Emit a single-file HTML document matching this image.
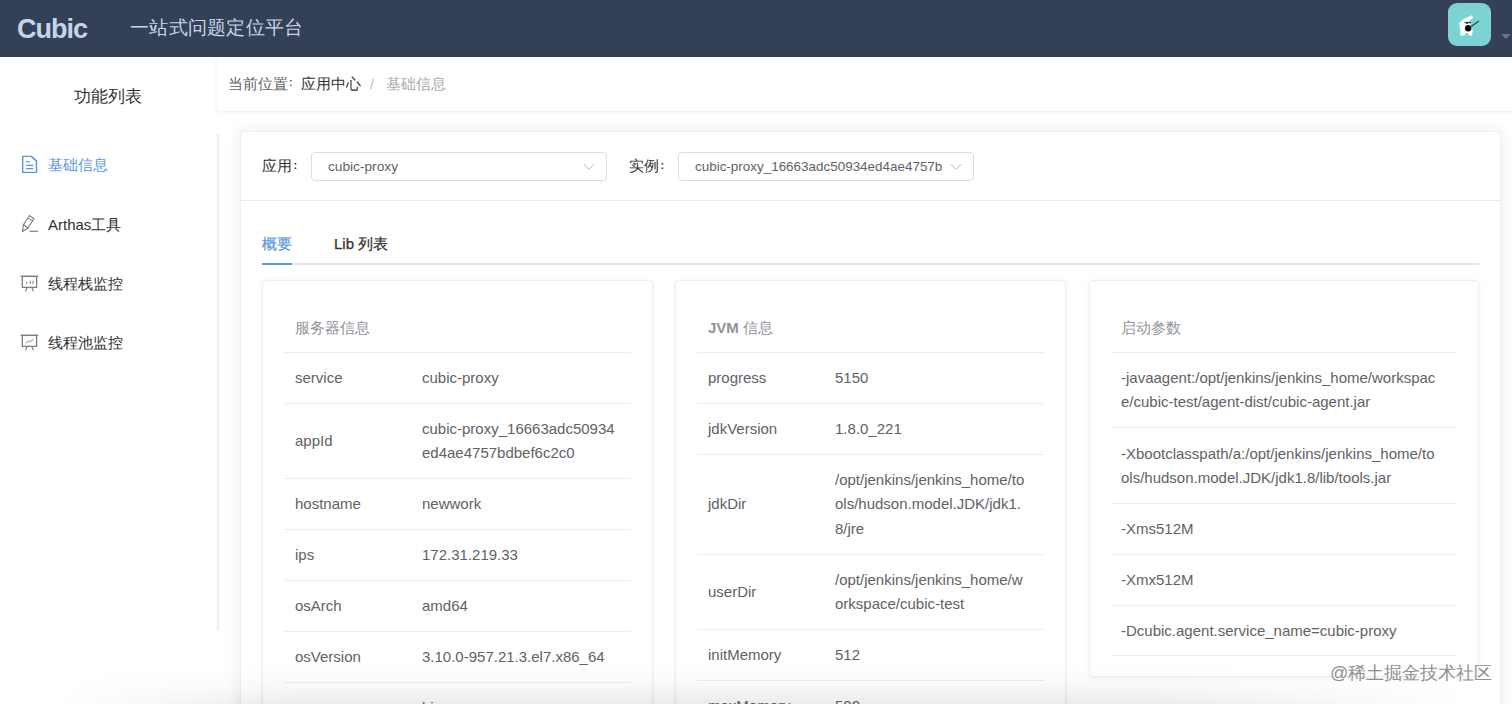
<!DOCTYPE html>
<html><head><meta charset="utf-8">
<style>
*{box-sizing:border-box;margin:0;padding:0}
html,body{width:1512px;height:704px;overflow:hidden;background:#fff;font-family:"Liberation Sans",sans-serif;}
.abs{position:absolute}
#hdr{left:0;top:0;width:1512px;height:57px;background:#334056}
#logo{left:17px;top:13.5px;font-size:27px;font-weight:bold;color:#c6d4e7;line-height:30px;letter-spacing:-1px}
#title{left:130px;top:16px;font-size:19px;letter-spacing:0.25px;color:#c8d5e8;line-height:24px;white-space:nowrap}
#avatar{left:1448px;top:3px;width:43px;height:43px;border-radius:9px;background:#7dd3d3;overflow:hidden}
#caret{left:1501px;top:34px;width:0;height:0;border-left:5px solid transparent;border-right:5px solid transparent;border-top:5px solid #6d7584}
#side-title{left:0;top:84.5px;width:215px;text-align:center;font-size:17px;color:#303133;line-height:24px}
.mi{left:0;width:218px;height:30px;line-height:30px;font-size:15px;color:#303133;white-space:nowrap}
.mi .t{position:absolute;left:48px;top:0}
.mi svg{position:absolute;left:20px;top:7px}
#vline{left:217px;top:134px;width:2px;height:496px;background:#ededed}
#crumb{left:217px;top:57px;width:1300px;height:54px;background:#fff;box-shadow:0 1px 5px rgba(0,0,0,0.07);border-radius:2px}
.cr{top:72px;line-height:24px;font-size:14.7px;white-space:nowrap}
#panel{left:240px;top:131px;width:1260.5px;height:600px;background:#fff;box-shadow:0 0 14px 1px rgba(0,0,0,0.07);border:1px solid #f0f0f0;border-radius:3px}
.lbl{font-size:15px;color:#303133;line-height:24px;white-space:nowrap}
.colon{font-size:11px;line-height:11px;font-weight:bold}
.sel{height:29px;border:1px solid #dddddd;border-radius:4px;background:#fff}
.sel .v{position:absolute;left:16px;top:0;line-height:27px;font-size:13.7px;color:#606266;white-space:nowrap}
.sel svg{position:absolute;top:10px}
#formline{left:241px;top:200px;width:1259px;height:1px;background:#ebebeb}
#tabline{left:262px;top:263px;width:1217px;height:2px;background:#e6e6e6}
#tabbar{left:262px;top:263px;width:30px;height:2px;background:#5b97dc}
.tab{font-size:15px;-webkit-text-stroke:0.25px currentColor;line-height:24px;white-space:nowrap;top:232px}
.card{top:280px;width:391px;background:#fff;border:1px solid #eeeeee;border-radius:4px;box-shadow:0 1px 6px rgba(0,0,0,0.05);overflow:hidden}
.card .hd{position:absolute;left:32px;top:35px;font-size:15px;line-height:24px;color:#909399;white-space:nowrap}
.row{position:absolute;left:21px;width:347px;border-top:1px solid #ededed}
.row .k{position:absolute;left:11px;font-size:15px;color:#606266;line-height:24.3px;white-space:nowrap}
.row .val{position:absolute;left:138px;font-size:15px;color:#606266;line-height:24.3px;white-space:nowrap}
.row .full{position:absolute;left:10px;font-size:15px;color:#606266;line-height:24.3px;white-space:nowrap}
#shade{left:0;top:666px;width:1512px;height:38px;background:linear-gradient(to bottom,rgba(0,0,0,0) 0,rgba(0,0,0,0.025) 50%,rgba(0,0,0,0.08) 100%);-webkit-mask-image:linear-gradient(to right,transparent 60px,#000 300px,#000 1150px,transparent 1470px)}
#wm{left:1330px;top:660px;font-size:18px;color:#8f8f8f;line-height:26px;white-space:nowrap;text-shadow:0 0 1px #fff}
</style></head><body>
<div id="hdr" class="abs"></div>
<div id="logo" class="abs">Cubic</div>
<div id="title" class="abs">一站式问题定位平台</div>
<div id="avatar" class="abs">
<svg width="43" height="43" viewBox="0 0 43 43">
<path d="M11.3 20 L15.5 15.9 L24 12.3 L25 14.8 L19.5 19.5 L23.5 22 L24.8 27.5 L24 32.6 L20.8 32.6 L20 30 L17.5 30 L16.4 32.6 L12.3 32.6 L12.5 28 L11.5 24 Z" fill="#fff"/>
<circle cx="20.2" cy="25.3" r="3.2" fill="#0a0a0a"/>
<path d="M16.4 19.3 L22.8 19.6" stroke="#222" stroke-width="0.9"/>
<circle cx="19" cy="20.2" r="0.9" fill="#222"/>
<path d="M22.5 23.8 L31 18" stroke="#1b5c5c" stroke-width="1.4"/>
</svg>
</div>
<div id="caret" class="abs"></div>

<div id="side-title" class="abs">功能列表</div>
<div class="mi abs" style="top:150px;color:#5b97dc"><span class="t">基础信息</span></div>
<svg class="abs" style="left:20px;top:154px" width="20" height="20" viewBox="0 0 20 20"><path d="M2.7 2.4 H11.4 L16.5 7 V18.4 H2.7 Z" fill="none" stroke="#5b97dc" stroke-width="1.4" stroke-linejoin="round"/><path d="M11.4 2.4 L16.5 7" stroke="#5b97dc" stroke-width="1.2"/><path d="M6.2 7.6 H9.8 M6.2 11.3 H13.2 M6.2 14.6 H13.2" stroke="#5b97dc" stroke-width="1.2"/></svg>
<div class="mi abs" style="top:210px"><span class="t">Arthas工具</span></div>
<svg class="abs" style="left:20px;top:214px" width="20" height="20" viewBox="0 0 20 20"><path d="M9.5 1.5 L14 4.8 L7.95 14 L3.45 10.7 Z M3.45 10.7 L2.5 17.5 L7.95 14 M8.1 3.6 L12.6 6.9" fill="none" stroke="#7d7d7d" stroke-width="1.1" stroke-linejoin="round"/><path d="M9.5 17.3 H17.8" stroke="#7d7d7d" stroke-width="1.2"/></svg>
<div class="mi abs" style="top:269px"><span class="t">线程栈监控</span></div>
<svg class="abs" style="left:20px;top:274px" width="20" height="20" viewBox="0 0 20 20"><path d="M0.7 2.3 H18.2" stroke="#7d7d7d" stroke-width="1.5"/><path d="M2.3 2.3 V13.4 H16.6 V2.3" fill="none" stroke="#7d7d7d" stroke-width="1.3"/><path d="M7.1 13.4 L5.5 17.4 M11.9 13.4 L13.4 17.4" stroke="#7d7d7d" stroke-width="1.2"/><path d="M6.7 8 V9.9 M10.3 6.7 V9.9 M13 6.7 V9.9" stroke="#7d7d7d" stroke-width="1"/></svg>
<div class="mi abs" style="top:328px"><span class="t">线程池监控</span></div>
<svg class="abs" style="left:20px;top:333px" width="20" height="20" viewBox="0 0 20 20"><path d="M0.7 2.3 H18.2" stroke="#7d7d7d" stroke-width="1.5"/><path d="M2.3 2.3 V13.4 H16.6 V2.3" fill="none" stroke="#7d7d7d" stroke-width="1.3"/><path d="M7.1 13.4 L5.5 17.4 M11.9 13.4 L13.4 17.4" stroke="#7d7d7d" stroke-width="1.2"/><path d="M5.9 10.1 L8.7 7.7 L10.3 8.9 L13.4 6.1" fill="none" stroke="#7d7d7d" stroke-width="1"/></svg>
<div id="vline" class="abs"></div>

<div id="crumb" class="abs"></div>
<div class="cr abs" style="left:228px;color:#606266">当前位置</div>
<div class="colon abs" style="left:289px;top:77px;color:#606266">:</div>
<div class="cr abs" style="left:301px;color:#303133">应用中心</div>
<div class="cr abs" style="left:370px;color:#c0c4cc">/</div>
<div class="cr abs" style="left:386px;color:#a8abb2">基础信息</div>
<div id="panel" class="abs"></div>
<div class="lbl abs" style="left:262px;top:153.5px">应用</div><div class="colon abs" style="left:293.5px;top:159.5px;color:#303133">:</div>
<div class="sel abs" style="left:311px;top:152px;width:296px"><span class="v">cubic-proxy</span><svg style="left:271px" width="12" height="8" viewBox="0 0 12 8"><path d="M0.8 1 L6 6.5 L11.2 1" fill="none" stroke="#b8bcc4" stroke-width="1"/></svg></div>
<div class="lbl abs" style="left:629px;top:153.5px">实例</div><div class="colon abs" style="left:660.5px;top:159.5px;color:#303133">:</div>
<div class="sel abs" style="left:678px;top:152px;width:296px"><span class="v" style="font-size:13.45px">cubic-proxy_16663adc50934ed4ae4757b</span><svg style="left:271px" width="12" height="8" viewBox="0 0 12 8"><path d="M0.8 1 L6 6.5 L11.2 1" fill="none" stroke="#b8bcc4" stroke-width="1"/></svg></div>
<div id="formline" class="abs"></div>
<div class="tab abs" style="left:262px;color:#5b97dc">概要</div>
<div class="tab abs" style="left:334px;color:#303133">Lib 列表</div>
<div id="tabline" class="abs"></div>
<div id="tabbar" class="abs"></div>

<!-- card 1 -->
<div class="card abs" style="left:262px;height:440px">
<div class="hd">服务器信息</div>
<div class="row" style="top:71px;height:51px"><span class="k" style="top:13px">service</span><span class="val" style="top:13px">cubic-proxy</span></div>
<div class="row" style="top:122px;height:75px"><span class="k" style="top:25px">appId</span><span class="val" style="top:13px">cubic-proxy_16663adc50934<br>ed4ae4757bdbef6c2c0</span></div>
<div class="row" style="top:197px;height:51px"><span class="k" style="top:13px">hostname</span><span class="val" style="top:13px">newwork</span></div>
<div class="row" style="top:248px;height:51px"><span class="k" style="top:13px">ips</span><span class="val" style="top:13px">172.31.219.33</span></div>
<div class="row" style="top:299px;height:51px"><span class="k" style="top:13px">osArch</span><span class="val" style="top:13px">amd64</span></div>
<div class="row" style="top:350px;height:51px"><span class="k" style="top:13px">osVersion</span><span class="val" style="top:13px">3.10.0-957.21.3.el7.x86_64</span></div>
<div class="row" style="top:401px;height:51px"><span class="k" style="top:13px">user</span><span class="val" style="top:13px">bin</span></div>
</div>

<!-- card 2 -->
<div class="card abs" style="left:675px;height:440px">
<div class="hd" style="color:#909399"><b style="font-weight:bold">JVM</b> 信息</div>
<div class="row" style="top:71px;height:51px"><span class="k" style="top:13px">progress</span><span class="val" style="top:13px">5150</span></div>
<div class="row" style="top:122px;height:51px"><span class="k" style="top:13px">jdkVersion</span><span class="val" style="top:13px">1.8.0_221</span></div>
<div class="row" style="top:173px;height:100px"><span class="k" style="top:37px">jdkDir</span><span class="val" style="top:13px">/opt/jenkins/jenkins_home/to<br>ols/hudson.model.JDK/jdk1.<br>8/jre</span></div>
<div class="row" style="top:273px;height:75px"><span class="k" style="top:25px">userDir</span><span class="val" style="top:13px">/opt/jenkins/jenkins_home/w<br>orkspace/cubic-test</span></div>
<div class="row" style="top:348px;height:51px"><span class="k" style="top:13px">initMemory</span><span class="val" style="top:13px">512</span></div>
<div class="row" style="top:399px;height:51px"><span class="k" style="top:13px">maxMemory</span><span class="val" style="top:13px">500</span></div>
</div>

<!-- card 3 -->
<div class="card abs" style="left:1089px;height:397px;width:390px">
<div class="hd" style="left:31px">启动参数</div>
<div class="row" style="width:345px;top:71px;height:75px"><span class="full" style="top:13px">-javaagent:/opt/jenkins/jenkins_home/workspac<br>e/cubic-test/agent-dist/cubic-agent.jar</span></div>
<div class="row" style="width:345px;top:146px;height:76px"><span class="full" style="top:13.5px">-Xbootclasspath/a:/opt/jenkins/jenkins_home/to<br>ols/hudson.model.JDK/jdk1.8/lib/tools.jar</span></div>
<div class="row" style="width:345px;top:222px;height:51px"><span class="full" style="top:13px">-Xms512M</span></div>
<div class="row" style="width:345px;top:273px;height:51px"><span class="full" style="top:13px">-Xmx512M</span></div>
<div class="row" style="width:345px;top:324px;height:51px;border-bottom:1px solid #ededed"><span class="full" style="top:13px">-Dcubic.agent.service_name=cubic-proxy</span></div>
</div>

<div id="shade" class="abs"></div>
<div id="wm" class="abs">@稀土掘金技术社区</div>
</body></html>
